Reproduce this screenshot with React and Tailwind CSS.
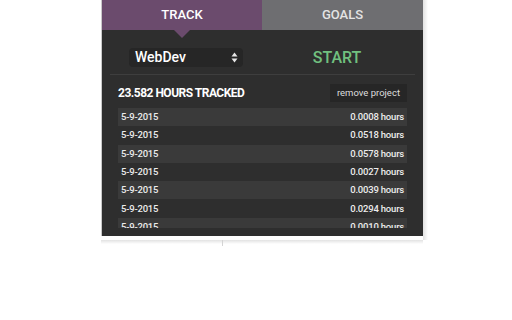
import React from "react";

const rows = [
  { date: "5-9-2015", hours: "0.0008 hours" },
  { date: "5-9-2015", hours: "0.0518 hours" },
  { date: "5-9-2015", hours: "0.0578 hours" },
  { date: "5-9-2015", hours: "0.0027 hours" },
  { date: "5-9-2015", hours: "0.0039 hours" },
  { date: "5-9-2015", hours: "0.0294 hours" },
  { date: "5-9-2015", hours: "0.0010 hours" },
];

export default function App() {
  return (
    <div className="w-[512px] h-[320px] bg-white font-['Roboto',sans-serif] overflow-hidden">
      <div className="ml-[101px] w-[327px]">
        <div className="flex">
          {/* popup panel */}
          <div className="w-[322px] h-[236px] bg-[#2e2e2e] border-l border-[#c9c9c9] flex flex-col">
            {/* Tabs */}
            <div className="relative flex h-[30px]">
              <div className="w-[160px] bg-[#6b4b6d] flex items-center justify-center text-[13px] font-medium text-white">
                TRACK
              </div>
              <div className="flex-1 bg-[#6e6e71] flex items-center justify-center text-[13px] font-medium text-[#e4e4e4]">
                GOALS
              </div>
              <div className="absolute left-[72px] top-[30px] w-0 h-0 border-l-[8px] border-r-[8px] border-t-[8px] border-l-transparent border-r-transparent border-t-[#6b4b6d]" />
            </div>

            {/* Project select + start */}
            <div className="flex items-center mt-[18px] h-[19px]">
              <div className="ml-[27px] w-[114px] h-[19px] rounded bg-[#262626] flex items-center justify-between pl-[6px] pr-[5px]">
                <span className="text-[14px] font-medium text-white">WebDev</span>
                <svg width="7" height="11" viewBox="0 0 7 11">
                  <path d="M3.5 0.5 L6.5 4.5 L0.5 4.5 Z" fill="#e6e6e6" />
                  <path d="M3.5 10.5 L6.5 6.5 L0.5 6.5 Z" fill="#e6e6e6" />
                </svg>
              </div>
              <div className="ml-[44px] w-[100px] text-center text-[16px] font-medium text-[#71c07f]">
                START
              </div>
            </div>

            <div className="mx-[8px] mt-[7px] h-px bg-[#3e3e3e]" />

            {/* Header */}
            <div className="flex items-center justify-between pl-[16px] pr-[16px] mt-[9px] h-[18px]">
              <span className="text-[12px] font-bold text-white tracking-[-0.5px]">23.582 HOURS TRACKED</span>
              <button className="h-[18px] px-[7px] bg-[#262626] text-[9.5px] text-[#dedede]">
                remove project
              </button>
            </div>

            {/* Entries */}
            <div className="mx-[16px] mt-[6px] h-[120px] overflow-hidden">
              {rows.map((r, i) => (
                <div
                  key={i}
                  className={`flex items-center justify-between h-[18.3px] px-[3px] text-[9.5px] font-medium text-[#ececec] tracking-[-0.2px] ${
                    i % 2 === 0 ? "bg-[#3a3a3a]" : "bg-[#2e2e2e]"
                  }`}
                >
                  <span>{r.date}</span>
                  <span>{r.hours}</span>
                </div>
              ))}
            </div>
          </div>
          <div className="w-[5px] h-[240px] bg-gradient-to-r from-[#e2e2e2] to-white" />
        </div>
        <div className="flex h-[4px] w-[322px] bg-gradient-to-b from-[#e2e2e2] to-white">
          <div className="ml-[121px] w-px h-[6px] bg-[#d4d4d4]" />
        </div>
      </div>
    </div>
  );
}
